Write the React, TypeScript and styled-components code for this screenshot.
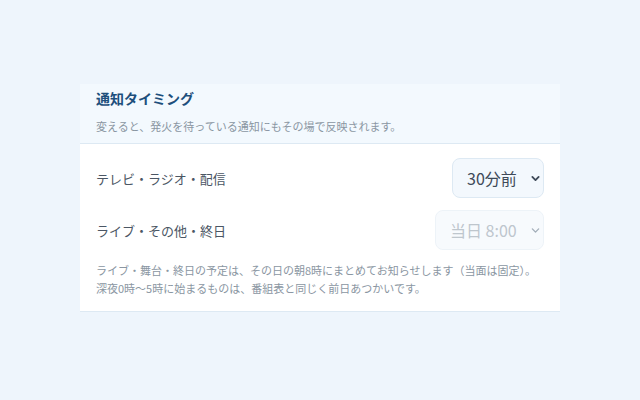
import React from "react";
import styled, { createGlobalStyle } from "styled-components";

const Global = createGlobalStyle`
  html, body { margin: 0; padding: 0; background: #eef5fc; }
  body { font-family: "Noto Sans CJK JP", "Noto Sans", sans-serif; }
  * { box-sizing: border-box; }
`;

const Page = styled.div`
  width: 640px;
  height: 400px;
  padding: 84px 80px 0;
`;

const Card = styled.section`
  background: #ffffff;
  border-bottom: 1px solid #dde9f3;
`;

const Header = styled.header`
  background: #f3f9fe;
  border-bottom: 1px solid #dde9f3;
  padding: 4px 16px 9px;
  display: flex;
  flex-direction: column;
  gap: 10px;
`;

const Title = styled.h2`
  margin: 0;
  font-size: 14px;
  line-height: 20px;
  font-weight: 700;
  color: #1d4f7c;
`;

const Sub = styled.p`
  margin: 0;
  font-size: 11px;
  line-height: 16px;
  color: #8a96a2;
`;

const Body = styled.div`
  padding: 14px 16px 14px;
  display: flex;
  flex-direction: column;
  gap: 12px;
`;

const Row = styled.div`
  display: flex;
  align-items: center;
  justify-content: space-between;
`;

const Label = styled.span`
  font-size: 13px;
  color: #4b5664;
`;

const SelectWrap = styled.div`
  position: relative;
  display: flex;
`;

const Select = styled.select<{ $w: number }>`
  appearance: none;
  width: ${(p) => p.$w}px;
  height: 40px;
  padding: 0 0 0 14px;
  border: 1px solid #dde9f3;
  border-radius: 8px;
  background: #f3f8fd;
  font-family: "Noto Sans CJK JP", "Noto Sans", sans-serif;
  font-size: 16px;
  color: #3e4a59;
  &:disabled {
    color: #a3aeb9;
    border-color: #e6eef6;
    background: #f5f9fd;
  }
`;

const Chevron = styled.svg<{ $dim?: boolean }>`
  position: absolute;
  right: 4px;
  top: 16px;
  width: 9px;
  height: 9px;
  pointer-events: none;
  color: ${(p) => (p.$dim ? "#a3aeb9" : "#3e4a59")};
`;

const Note = styled.p`
  margin: -1px 0 0;
  font-size: 11px;
  line-height: 18px;
  color: #8a96a2;
`;

const Chev = ({ dim }: { dim?: boolean }) => (
  <Chevron $dim={dim} viewBox="0 0 10 10">
    <path d="M1.5 3.2 L5 6.8 L8.5 3.2" fill="none" stroke="currentColor" strokeWidth={dim ? 1.5 : 2} strokeLinecap="round" strokeLinejoin="round" />
  </Chevron>
);

export default function App() {
  return (
    <>
      <Global />
      <Page>
        <Card>
          <Header>
            <Title>通知タイミング</Title>
            <Sub>変えると、発火を待っている通知にもその場で反映されます。</Sub>
          </Header>
          <Body>
            <Row>
              <Label>テレビ・ラジオ・配信</Label>
              <SelectWrap>
                <Select $w={92} defaultValue="30">
                  <option value="30">30分前</option>
                </Select>
                <Chev />
              </SelectWrap>
            </Row>
            <Row>
              <Label>ライブ・その他・終日</Label>
              <SelectWrap>
                <Select $w={109} disabled defaultValue="8">
                  <option value="8">当日 8:00</option>
                </Select>
                <Chev dim />
              </SelectWrap>
            </Row>
            <Note>
              ライブ・舞台・終日の予定は、その日の朝8時にまとめてお知らせします（当面は固定）。
              <br />
              深夜0時〜5時に始まるものは、番組表と同じく前日あつかいです。
            </Note>
          </Body>
        </Card>
      </Page>
    </>
  );
}
